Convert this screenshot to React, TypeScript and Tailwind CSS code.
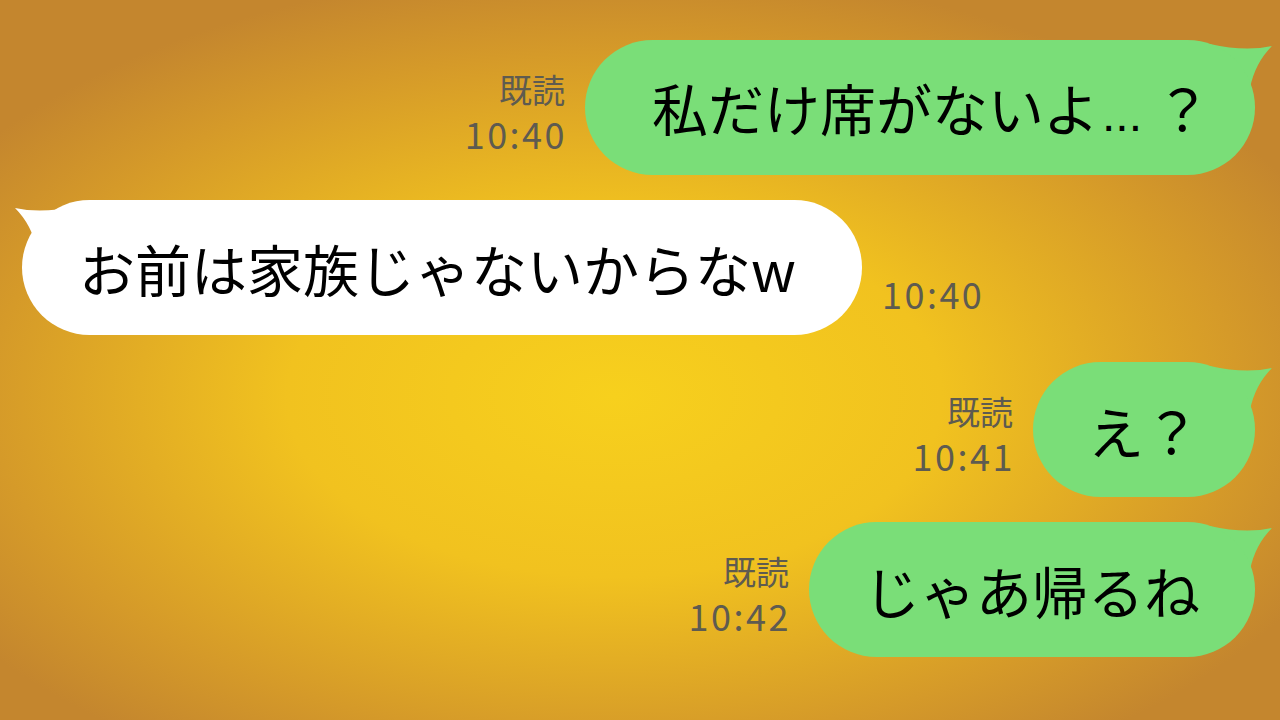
import React from "react";

const FONT = { fontFamily: '"Noto Sans CJK JP", "Noto Sans", sans-serif' };

function TailRight() {
  return (
    <svg
      className="absolute right-[-20px] top-[-2px]"
      width="65"
      height="50"
      viewBox="0 0 65 50"
    >
      <path d="M0 6 Q 35 14 62 8 Q 45 25 40 50 L 0 50 Z" fill="#7ade78" />
    </svg>
  );
}

function TailLeft() {
  return (
    <svg
      className="absolute left-[-10px] top-[0px] -scale-x-100"
      width="65"
      height="50"
      viewBox="0 0 65 50"
    >
      <path d="M0 6 Q 35 14 62 8 Q 45 25 40 50 L 0 50 Z" fill="#ffffff" />
    </svg>
  );
}

function Meta({ read, time }: { read?: boolean; time: string }) {
  return (
    <div className="flex flex-col items-end mb-[20px] text-[#5e5b50]">
      {read && <div className="text-[33px] leading-[44px]">既読</div>}
      <div className="text-[36px] leading-[44px] tracking-[2.5px] mr-[-2px]">{time}</div>
    </div>
  );
}

function Sent({
  children,
  time,
  pad,
}: {
  children: React.ReactNode;
  time: string;
  pad: string;
}) {
  return (
    <div className="flex items-end justify-end gap-[20px] pr-[25px]">
      <Meta read time={time} />
      <div className="relative">
        <TailRight />
        <div
          className={
            "relative h-[135px] rounded-full bg-[#7ade78] flex items-center text-[56px] text-black whitespace-nowrap " +
            pad
          }
        >
          <span>{children}</span>
        </div>
      </div>
    </div>
  );
}

export default function App() {
  return (
    <div
      style={FONT}
      className="w-[1280px] h-[720px] overflow-hidden bg-[radial-gradient(ellipse_780px_430px_at_48%_55%,#f7d01d_0%,#f1c21f_42%,#d59a29_80%,#c4862e_100%)]"
    >
      <div className="flex flex-col pt-[40px] gap-[25px]">
        <Sent time="10:40" pad="pl-[67px] pr-[44px]">
          私だけ席がないよ
          <span
            className="ml-[3px] mr-[13px] text-[48px]"
            style={{ fontFamily: '"Liberation Sans", sans-serif' }}
          >
            ...
          </span>
          ？
        </Sent>
        <div className="flex items-end gap-[20px] pl-[22px]">
          <div className="relative">
            <TailLeft />
            <div className="relative h-[135px] rounded-full bg-white pl-[57px] pr-[66px] flex items-center text-[56px] text-black whitespace-nowrap">
              お前は家族じゃないからなw
            </div>
          </div>
          <Meta time="10:40" />
        </div>
        <div className="mt-[2px]">
          <Sent time="10:41" pad="px-[55px]">
            え？
          </Sent>
        </div>
        <Sent time="10:42" pad="px-[55px]">
          じゃあ帰るね
        </Sent>
      </div>
    </div>
  );
}
